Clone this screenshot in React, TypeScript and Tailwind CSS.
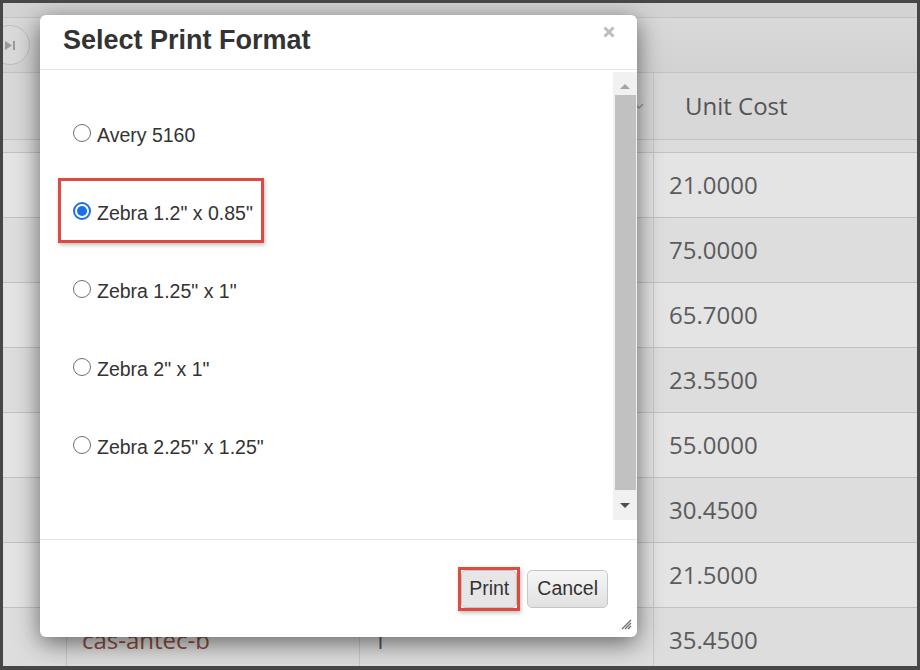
import React from "react";

const rows = ["21.0000", "75.0000", "65.7000", "23.5500", "55.0000", "30.4500", "21.5000", "35.4500"];
const options = ['Avery 5160', 'Zebra 1.2" x 0.85"', 'Zebra 1.25" x 1"', 'Zebra 2" x 1"', 'Zebra 2.25" x 1.25"'];

function Radio({ checked }: { checked: boolean }) {
  if (checked) {
    return (
      <span className="w-[18px] h-[18px] rounded-full border-[2px] border-[#1a6fe6] bg-white flex items-center justify-center shrink-0">
        <span className="w-[10px] h-[10px] rounded-full bg-[#1a6fe6]" />
      </span>
    );
  }
  return <span className="w-[18px] h-[18px] rounded-full border-[1.5px] border-[#6f6f6f] bg-white shrink-0" />;
}

export default function App() {
  return (
    <div className="w-[920px] h-[670px] bg-[#474747] pt-[3px] pl-[3px] pr-[3px] pb-[4px]">
      <div className="relative w-full h-full overflow-hidden bg-[#d9d9d9] flex flex-col font-['Open_Sans',sans-serif]">
        {/* top strip */}
        <div className="h-[15px] shrink-0 border-b border-[#c2c2c2] bg-[#d3d3d3]" />
        {/* toolbar */}
        <div className="h-[55px] shrink-0 border-b border-[#c2c2c2] bg-gradient-to-b from-[#d9d9d9] to-[#d2d2d2] flex items-center">
          <div className="ml-[-13px] w-[40px] h-[40px] rounded-full border border-[#bdbdbd] bg-[#d9d9d9] flex items-center justify-center">
            <svg width="11" height="9" viewBox="0 0 11 9" className="ml-[1px]">
              <polygon points="0,0 7,4.5 0,9" fill="#9a9a9a" />
              <rect x="8" y="0" width="2" height="9" fill="#9a9a9a" />
            </svg>
          </div>
        </div>
        {/* header row */}
        <div className="h-[67px] shrink-0 border-b border-[#c2c2c2] bg-[#d8d8d8] flex">
          <div className="w-[64px] border-r border-[#c6c6c6]" />
          <div className="w-[293px] border-r border-[#c6c6c6]" />
          <div className="w-[294px] border-r border-[#c6c6c6] flex items-center justify-end pr-[9px]">
            <svg width="10" height="7" viewBox="0 0 10 7">
              <path d="M1 1 L5 5 L9 1" stroke="#9a9a9a" strokeWidth="1.5" fill="none" />
            </svg>
          </div>
          <div className="flex-1 flex items-center pl-[31px] text-[24px] text-[#555]">Unit Cost</div>
        </div>
        {/* thin row */}
        <div className="h-[13px] shrink-0 border-b border-[#c2c2c2] bg-[#dcdcdc] flex">
          <div className="w-[64px] border-r border-[#c6c6c6]" />
          <div className="w-[293px] border-r border-[#c6c6c6]" />
          <div className="w-[294px] border-r border-[#c6c6c6]" />
          <div className="flex-1" />
        </div>
        {/* data rows */}
        {rows.map((v, i) => (
          <div
            key={i}
            className={`h-[65px] shrink-0 border-b border-[#c2c2c2] flex ${i % 2 === 0 ? "bg-[#e4e4e4]" : "bg-[#dddddd]"}`}
          >
            <div className="w-[64px] border-r border-[#c6c6c6]" />
            <div className="w-[293px] border-r border-[#c6c6c6] flex items-center pl-[15px] text-[24px] text-[#8c4c40]">
              {i === 7 ? "cas-antec-b" : ""}
            </div>
            <div className="w-[294px] border-r border-[#c6c6c6] flex items-center pl-[13px] text-[24px] text-[#5b5b5b]">
              {i === 7 ? "1" : ""}
            </div>
            <div className="flex-1 flex items-center pl-[15px] text-[24px] text-[#5b5b5b]">{v}</div>
          </div>
        ))}

        {/* dialog */}
        <div className="absolute left-[37px] top-[12px] w-[597px] h-[622px] bg-white rounded-[6px] shadow-[0_6px_24px_rgba(0,0,0,0.55)] flex flex-col font-['Liberation_Sans',Arial,sans-serif] text-[#333]">
          <div className="h-[55px] shrink-0 border-b border-[#e5e5e5] flex items-start justify-between pl-[23px] pr-[22px] pt-[10px]">
            <h1 className="text-[27px] leading-[31px] font-bold text-[#333]">Select Print Format</h1>
            <svg width="12" height="12" viewBox="0 0 12 12" className="mt-[1px]">
              <path d="M1.5 1.5 L10.5 10.5 M10.5 1.5 L1.5 10.5" stroke="#bdbdbd" strokeWidth="3" />
            </svg>
          </div>
          <div className="h-[469px] shrink-0 pt-[2px]">
            <div className="h-[448px] flex">
              <div className="flex-1 pl-[33px] pt-[22px]">
                {options.map((o, i) => (
                  <div key={i} className="relative h-[78px] flex items-center gap-[6px]">
                    {i === 1 && (
                      <div className="absolute -left-[15px] top-[6px] w-[206px] h-[65px] border-[3px] border-[#dc4a44] shadow-[1px_2px_4px_rgba(0,0,0,0.25)]" />
                    )}
                    <Radio checked={i === 1} />
                    <span className="text-[19.5px] pt-[5px] text-[#333]">{o}</span>
                  </div>
                ))}
              </div>
              <div className="w-[24px] bg-[#f1f1f1] flex flex-col">
                <div className="h-[17px] flex items-end justify-center">
                  <svg width="10" height="5" viewBox="0 0 10 5">
                    <polygon points="0,5 5,0 10,5" fill="#a3a3a3" />
                  </svg>
                </div>
                <div className="h-[6px]" />
                <div className="ml-[2px] w-[21px] h-[395px] bg-[#c1c1c1]" />
                <div className="flex-1 flex items-center justify-center">
                  <svg width="10" height="5" viewBox="0 0 10 5">
                    <polygon points="0,0 10,0 5,5" fill="#505050" />
                  </svg>
                </div>
              </div>
            </div>
          </div>
          <div className="relative flex-1 border-t border-[#e5e5e5] flex items-center justify-end pr-[29px] gap-[10px]">
            <span className="relative">
              <span className="absolute -inset-[3px] border-[3px] border-[#dc4a44] shadow-[1px_2px_4px_rgba(0,0,0,0.25)]" />
              <button className="h-[38px] px-[7px] rounded-[5px] border border-[#c4c4c4] bg-[#e6e6e6] text-[19.5px] text-[#333]">
                Print
              </button>
            </span>
            <button className="h-[38px] px-[9px] rounded-[5px] border border-[#c6c6c6] bg-gradient-to-b from-[#f6f6f6] to-[#e1e1e1] text-[19.5px] text-[#333]">
              Cancel
            </button>
            <svg width="11" height="11" viewBox="0 0 11 11" className="absolute right-[5px] bottom-[7px]">
              <path d="M10 1 L1 10 M10 4 L4 10 M10 7 L7 10" stroke="#6a6a6a" strokeWidth="1.2" />
            </svg>
          </div>
        </div>
      </div>
    </div>
  );
}
